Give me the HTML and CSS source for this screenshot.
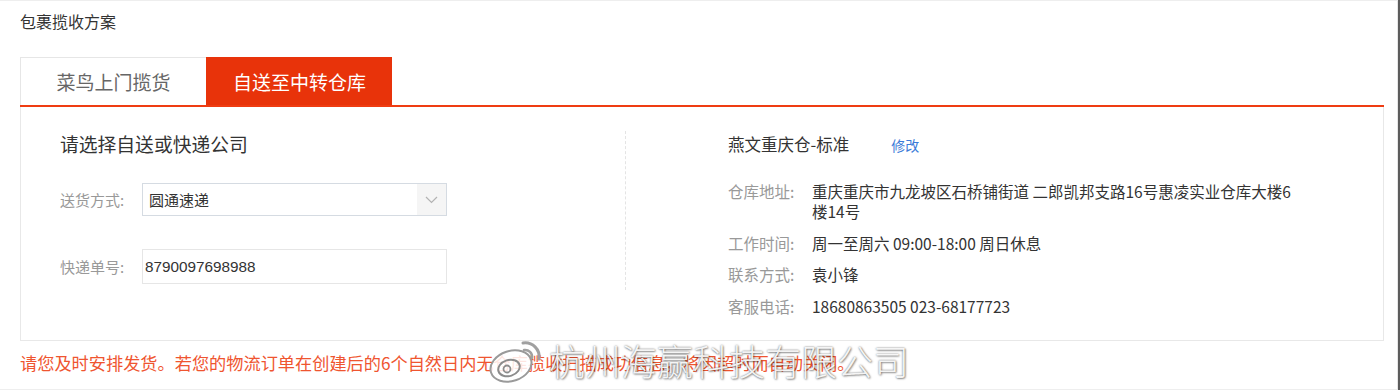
FILE: index.html
```
<!DOCTYPE html>
<html lang="zh-CN">
<head>
    <meta charset="UTF-8">
    <title>包裹揽收方案</title>
    <link rel="stylesheet" href="styles.css">
</head>
<body>
    <div class="frame">
        <div class="title">包裹揽收方案</div>

        <div class="tabs">
            <div class="tab">菜鸟上门揽货</div>
            <div class="tab active">自送至中转仓库</div>
        </div>

        <div class="box">
            <div class="left-col">
                <h2 class="heading">请选择自送或快递公司</h2>
                <div class="form-row">
                    <span class="form-label">送货方式:</span>
                    <div class="select">
                        <span class="select-text">圆通速递</span>
                        <span class="select-arrow">
                            <svg width="13" height="8" viewBox="0 0 13 8"><path d="M1 1 L6.5 6.5 L12 1" fill="none" stroke="#b3b3b3" stroke-width="1.2"/></svg>
                        </span>
                    </div>
                </div>
                <div class="form-row">
                    <span class="form-label">快递单号:</span>
                    <input class="text-input" type="text" value="8790097698988">
                </div>
            </div>

            <div class="divider"></div>

            <div class="right-col">
                <h2 class="heading small">燕文重庆仓-标准<a class="edit-link" href="#">修改</a></h2>
                <div class="info-row">
                    <span class="info-label">仓库地址:</span>
                    <span class="info-value addr">重庆重庆市九龙坡区石桥铺街道 二郎凯邦支路16号惠凌实业仓库大楼6楼14号</span>
                </div>
                <div class="info-row">
                    <span class="info-label">工作时间:</span>
                    <span class="info-value">周一至周六 09:00-18:00 周日休息</span>
                </div>
                <div class="info-row">
                    <span class="info-label">联系方式:</span>
                    <span class="info-value">袁小锋</span>
                </div>
                <div class="info-row">
                    <span class="info-label">客服电话:</span>
                    <span class="info-value">18680863505 023-68177723</span>
                </div>
            </div>
        </div>

        <p class="notice">请您及时安排发货。若您的物流订单在创建后的6个自然日内无仓库揽收扫描成功信息，将因超时而自动关闭。</p>

        <div class="watermark">
            <svg class="wm-logo" width="62" height="54" viewBox="0 0 62 54">
                <ellipse cx="24" cy="33" rx="21" ry="15" transform="rotate(-18 24 33)" fill="rgba(255,255,255,0.85)" stroke="#9a9a9a" stroke-width="2"/>
                <ellipse cx="22" cy="35" rx="11" ry="8" transform="rotate(-18 22 35)" fill="none" stroke="#8c8c8c" stroke-width="2"/>
                <circle cx="20" cy="36" r="3.5" fill="none" stroke="#8c8c8c" stroke-width="1.8"/>
                <path d="M36 10 A14 14 0 0 1 52 26" fill="none" stroke="#a0a0a0" stroke-width="3" stroke-linecap="round"/>
                <path d="M37 17 A7 7 0 0 1 45 25" fill="none" stroke="#a0a0a0" stroke-width="2.5" stroke-linecap="round"/>
            </svg>
            <span class="wm-text">杭州海赢科技有限公司</span>
        </div>
    </div>
</body>
</html>
```

FILE: styles.css
```
/* page frame */
body {
    margin: 0;
    font-family: "Noto Sans CJK SC", "Liberation Sans", sans-serif;
    background: #fff;
    color: #333;
    border-right: 2px solid #5c5c5c;
}

.frame {
    position: relative;
    height: 390px;
    box-sizing: border-box;
    border-top: 1px solid #eee;
    border-right: 1px solid #e6e6e6;
    border-bottom: 1px solid #eee;
    overflow: hidden;
}

.title {
    padding: 10px 20px 0;
    font-size: 16px;
    line-height: 20px;
    color: #333;
}

/* tabs */
.tabs {
    display: flex;
    width: 1364px;
    margin: 26px 0 0 20px;
    border-bottom: 2px solid #ef3c12;
}

.tab {
    width: 186px;
    height: 48px;
    box-sizing: border-box;
    border-top: 1px solid #e6e6e6;
    border-left: 1px solid #e6e6e6;
    font-size: 19px;
    line-height: 47px;
    text-align: center;
    color: #666;
}

.tab.active {
    background: #e8330a;
    border-color: #e8330a;
    color: #fff;
}

/* content box */
.box {
    display: flex;
    width: 1364px;
    height: 234px;
    box-sizing: border-box;
    margin-left: 20px;
    border: 1px solid #e8e8e8;
    border-top: none;
}

.heading {
    margin: 0;
    font-size: 18.8px;
    font-weight: normal;
    line-height: 24px;
    color: #333;
}

.heading.small {
    font-size: 16.5px;
}

.left-col {
    width: 604px;
    box-sizing: border-box;
    padding: 25px 0 0 39px;
}

.form-row {
    display: flex;
    align-items: center;
    margin-top: 27px;
}

.form-row + .form-row {
    margin-top: 33px;
}

.form-label {
    width: 82px;
    font-size: 15px;
    color: #999;
}

.select {
    display: flex;
    width: 305px;
    height: 33px;
    box-sizing: border-box;
    border: 1px solid #d5dbe2;
    background: #fff;
}

.select-text {
    flex: 1;
    padding-left: 6px;
    font-size: 15px;
    line-height: 31px;
    color: #333;
}

.select-arrow {
    display: flex;
    align-items: center;
    justify-content: center;
    width: 29px;
    background: #f5f5f5;
}

.text-input {
    width: 305px;
    height: 35px;
    box-sizing: border-box;
    padding: 0 2px;
    border: 1px solid #e6e6e6;
    outline: none;
    font-family: "Liberation Sans", sans-serif;
    font-size: 15.3px;
    color: #333;
}

.divider {
    width: 0;
    height: 159px;
    margin-top: 24px;
    border-left: 1px dashed #e4e4e4;
}

.right-col {
    padding: 25px 0 0 102px;
}

.edit-link {
    margin-left: 42px;
    font-size: 14px;
    color: #3b7bd8;
    text-decoration: none;
}

.info-row {
    display: flex;
    margin-top: 11.5px;
    font-size: 15.5px;
    line-height: 20px;
}

.right-col .heading + .info-row {
    margin-top: 24px;
}

.info-label {
    width: 84px;
    flex-shrink: 0;
    color: #999;
}

.info-value {
    color: #333;
}

.info-value.addr {
    width: 485px;
}

.notice {
    margin: 11px 0 0 20px;
    font-size: 17.2px;
    line-height: 22px;
    color: #ef5530;
}

/* weibo watermark laid over the notice */
.watermark {
    position: absolute;
    left: 487px;
    top: 332px;
    display: flex;
    align-items: center;
}

.wm-text {
    font-size: 36px;
    font-weight: 300;
    color: rgba(255, 255, 255, 0.92);
    text-shadow: 0 0 2px rgba(0, 0, 0, 0.55), 1px 1px 2px rgba(0, 0, 0, 0.35);
}
```
